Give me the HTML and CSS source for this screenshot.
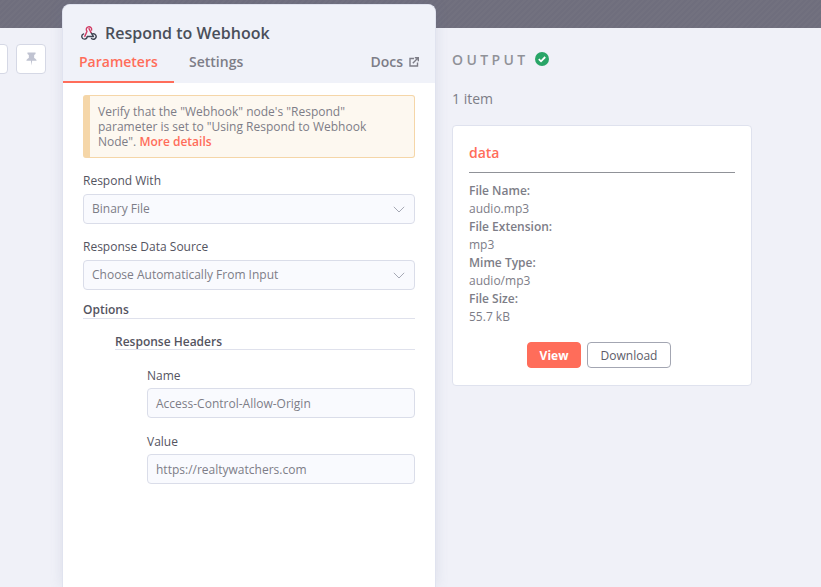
FILE: index.html
```html
<!DOCTYPE html>
<html lang="en">
<head>
<meta charset="utf-8">
<title>Respond to Webhook</title>
<link rel="stylesheet" href="styles.css">
</head>
<body>
<div class="backdrop"></div>
<div class="stage">
  <aside class="input-side">
    <div class="stub-btn"></div>
    <button class="pin-btn" aria-label="Pin">
      <svg width="11" height="14" viewBox="0 0 12 14"><path fill="#c0c3d1" d="M1.600 0h8.800v1.600L8.900 2.600v3.300c1.500.7 2.500 1.600 2.700 2.900H6.700L6 14l-.7-5.200H.4c.2-1.300 1.200-2.200 2.700-2.900V2.600L1.600 1.600z"/></svg>
    </button>
  </aside>
  <main class="panel">
    <header class="panel-head">
      <div class="title-row">
        <svg class="node-icon" width="16" height="16" viewBox="0 0 16 16" fill="none" stroke-width="1.400" stroke-linecap="round" stroke-linejoin="round">
          <path stroke="#3f4553" d="M2.600 8.900A2.700 2.700 0 1 0 6.200 11.500H12.500"/>
          <path stroke="#3f4553" d="M11.300 9A2.700 2.700 0 1 1 10.500 13.400"/>
          <path stroke="#3f4553" d="M10 7.500 12.300 11.300"/>
          <path stroke="#d13b63" d="M3.800 11.400 6 6.300A2.700 2.700 0 1 1 10.600 5.100"/>
          <path stroke="#d13b63" d="M8 3.600 10 7.500"/>
        </svg>
        <h1 class="title">Respond to Webhook</h1>
      </div>
      <nav class="tabs">
        <a class="tab tab-active">Parameters</a>
        <a class="tab">Settings</a>
        <a class="tab docs">Docs
          <svg width="10" height="10" viewBox="0 0 10 10" fill="none" stroke="#7d7d87" stroke-width="1.400"><path d="M5 1.500H1v7.500h7.500V5.500"/><path d="M3.800 6.200 9.200.8M5.800.7h3.500V4.200"/></svg>
        </a>
      </nav>
    </header>
    <div class="panel-body">
      <div class="notice">Verify that the "Webhook" node's "Respond" parameter is set to "Using Respond to Webhook Node". <a class="link">More details</a></div>
      <label class="field-label first">Respond With</label>
      <div class="select"><span>Binary File</span><svg width="12" height="7" viewBox="0 0 12 7" fill="none" stroke="#a6a9b5" stroke-width="1"><path d="M.8.8 6 6l5.200-5.200"/></svg></div>
      <label class="field-label second">Response Data Source</label>
      <div class="select"><span>Choose Automatically From Input</span><svg width="12" height="7" viewBox="0 0 12 7" fill="none" stroke="#a6a9b5" stroke-width="1"><path d="M.8.8 6 6l5.200-5.200"/></svg></div>
      <div class="section-title options">Options</div>
      <div class="nested">
        <div class="section-title headers">Response Headers</div>
        <div class="nested-fields">
          <label class="field-label name">Name</label>
          <div class="input">Access-Control-Allow-Origin</div>
          <label class="field-label value">Value</label>
          <div class="input">https://realtywatchers.com</div>
        </div>
      </div>
    </div>
  </main>
  <section class="output">
    <div class="output-head">
      <span class="output-title">OUTPUT</span>
      <svg width="14" height="14" viewBox="0 0 14 14"><circle cx="7" cy="7" r="7" fill="#29a567"/><path d="M3.800 7.200 6 9.300l4.200-4.300" fill="none" stroke="#fff" stroke-width="1.800"/></svg>
    </div>
    <div class="count">1 item</div>
    <article class="card">
      <div class="card-key">data</div>
      <dl class="meta">
        <dt>File Name:</dt><dd>audio.mp3</dd>
        <dt>File Extension:</dt><dd>mp3</dd>
        <dt>Mime Type:</dt><dd>audio/mp3</dd>
        <dt>File Size:</dt><dd>55.7 kB</dd>
      </dl>
      <div class="actions">
        <button class="btn btn-primary">View</button>
        <button class="btn btn-outline">Download</button>
      </div>
    </article>
  </section>
</div>
</body>
</html>
```
FILE: styles.css
```css
* { box-sizing: border-box; }
html, body { margin: 0; height: 100%; overflow: hidden; }
body {
  font-family: "Open Sans", sans-serif;
  background: #f0f1f8;
  color: #555;
}
.backdrop {
  height: 28px;
  background: repeating-linear-gradient(135deg, #6f6e7d 0 2px, #72717f 2px 4px);
}
.stage {
  display: flex;
  align-items: flex-start;
  height: 559px;
}
.input-side {
  flex: none;
  display: flex;
  gap: 8px;
  justify-content: flex-end;
  width: 86px;
  margin-left: -24px;
  padding: 16px 16px 0 0;
}
.stub-btn, .pin-btn {
  width: 30px;
  height: 30px;
  border: 1px solid #d5d8e5;
  border-radius: 4px;
  background: #fff;
  padding: 0;
  flex: none;
}
.pin-btn { display: flex; align-items: center; justify-content: center; }
.panel {
  width: 374px;
  flex: none;
  height: 583px;
  margin-top: -24px;
  background: #fff;
  border: 1px solid #e0e3ef;
  border-bottom: 0;
  border-radius: 8px 8px 0 0;
  box-shadow: 0 0 14px rgba(100, 110, 150, .14);
  overflow: hidden;
}
.panel-head {
  height: 78px;
  background: #f0f2f9;
  padding-top: 16px;
}
.title-row { display: flex; align-items: center; gap: 8px; padding-left: 18px; height: 24px; }
.title { margin: 0; font-size: 16px; font-weight: 600; line-height: 24px; color: #4a4f5a; }
.tabs { display: flex; align-items: flex-start; height: 38px; padding-right: 16px; }
.tab { font-size: 14px; font-weight: 600; line-height: 19px; padding: 7px 16px 0 15px; height: 38px; color: #7d7d87; }
.tab-active { color: #ff6d5a; border-bottom: 2px solid #ff6d5a; width: 111px; padding-left: 16px; }
.docs { margin-left: auto; padding: 7px 0 0; display: flex; gap: 6px; align-items: baseline; }
.panel-body { padding: 12px 20px 0; }
.notice {
  height: 63px;
  border: 1px solid #f5d6a8;
  border-left: 7px solid #f5d6a8;
  border-radius: 3px;
  background: #fdf8f0;
  padding: 8px 8px 0;
  font-size: 12px;
  line-height: 15px;
  color: #7d7d87;
}
.link { color: #ff6d5a; font-weight: 600; }
.field-label { display: block; font-size: 12px; line-height: 16px; color: #54545f; font-weight: 400; }
.field-label.first { margin: 15px 0 5px; }
.field-label.second { margin: 15px 0 5px; }
.field-label.name { margin: 18px 0 4px; }
.field-label.value { margin: 16px 0 4px; }
.select, .input {
  height: 30px;
  border: 1px solid #dadde9;
  border-radius: 4px;
  background: #f9fafe;
  font-size: 12px;
  line-height: 28px;
  padding: 0 8px;
  color: #7d7d87;
}
.input { padding-top: 1px; }
.select { display: flex; justify-content: space-between; align-items: center; padding-right: 9px; }
.section-title { font-size: 12px; font-weight: 600; line-height: 16px; color: #54545f; border-bottom: 1px solid #dfe1ec; }
.options { margin-top: 12px; height: 17px; }
.nested { padding-left: 32px; }
.headers { margin-top: 14px; height: 17px; line-height: 18px; }
.nested-fields { padding-left: 32px; }
.output { padding-left: 16px; flex: none; width: 316px; }
.output-head { display: flex; align-items: center; gap: 6px; height: 20px; margin-top: 21px; }
.output-title { font-size: 14px; font-weight: 600; letter-spacing: 3.400px; color: #909298; }
.count { font-size: 14px; line-height: 19px; color: #7d7d87; margin-top: 20px; }
.card {
  width: 300px;
  height: 261px;
  margin-top: 17px;
  background: #fff;
  border: 1px solid #dfe2ee;
  border-radius: 4px;
  padding: 17px 16px 0;
}
.card-key { font-size: 14px; font-weight: 600; line-height: 20px; color: #ff6d5a; padding-bottom: 9px; border-bottom: 1px solid #909298; }
.meta { margin: 9px 0 0; font-size: 12px; line-height: 18px; color: #7d7d87; }
.meta dt { font-weight: 600; }
.meta dd { margin: 0; }
.actions { display: flex; justify-content: center; gap: 6px; margin-top: 16px; padding-right: 6px; }
.btn { height: 26px; font-family: inherit; font-size: 12px; border-radius: 4px; padding: 0; }
.btn-primary { width: 54px; font-weight: 700; background: #ff6d5a; color: #fff; border: 1px solid #ff6d5a; }
.btn-outline { width: 84px; font-weight: 500; background: #fff; color: #5c5c68; border: 1px solid #a3a6b2; }
```
